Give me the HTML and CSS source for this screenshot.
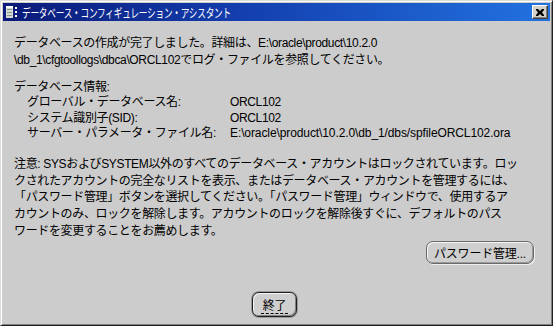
FILE: index.html
```html
<!DOCTYPE html>
<html lang="ja">
<head>
    <meta charset="UTF-8">
    <title>データベース・コンフィギュレーション・アシスタント</title>
    <link rel="stylesheet" href="styles.css">
</head>
<body>
    <div class="window">
        <div class="titlebar">
            <svg class="app-icon" width="14" height="14" viewBox="0 0 14 14">
                <rect x="1" y="1" width="7" height="12" fill="#d8d8d8"/>
                <rect x="1" y="1" width="7" height="2" fill="#ffffff"/>
                <rect x="2" y="4" width="5" height="1" fill="#7a9a7a"/>
                <rect x="2" y="7" width="5" height="1" fill="#7a9a7a"/>
                <rect x="2" y="10" width="5" height="1" fill="#7a9a7a"/>
                <rect x="10" y="2" width="2" height="2" fill="#ffffff"/>
                <rect x="10" y="6" width="2" height="2" fill="#ffffff"/>
                <rect x="10" y="10" width="2" height="2" fill="#ffffff"/>
            </svg>
            <span class="title">データベース・コンフィギュレーション・アシスタント</span>
            <div class="close-btn">
                <svg width="8" height="7" viewBox="0 0 8 7">
                    <path d="M0 0h2l2 2 2-2h2v1l-2 2.5 2 2.5v1h-2l-2-2-2 2h-2v-1l2-2.5-2-2.5z" fill="#000"/>
                </svg>
            </div>
        </div>
        <div class="content">
            <p class="msg">データベースの作成が完了しました。詳細は、E:\oracle\product\10.2.0<br>\db_1\cfgtoollogs\dbca\ORCL102でログ・ファイルを参照してください。</p>
            <div class="info">
                <div class="info-head">データベース情報:</div>
                <div class="info-row"><span class="label">グローバル・データベース名:</span><span>ORCL102</span></div>
                <div class="info-row"><span class="label">システム識別子(SID):</span><span>ORCL102</span></div>
                <div class="info-row"><span class="label">サーバー・パラメータ・ファイル名:</span><span class="path">E:\oracle\product\10.2.0\db_1/dbs/spfileORCL102.ora</span></div>
            </div>
            <p class="note">注意: SYSおよびSYSTEM以外のすべてのデータベース・アカウントはロックされています。ロッ<br>クされたアカウントの完全なリストを表示、またはデータベース・アカウントを管理するには、<br>「パスワード管理」ボタンを選択してください。「パスワード管理」ウィンドウで、使用するア<br>カウントのみ、ロックを解除します。アカウントのロックを解除後すぐに、デフォルトのパス<br>ワードを変更することをお薦めします。</p>
            <div class="pw-row">
                <button class="btn">パスワード管理...</button>
            </div>
            <div class="exit-row">
                <button class="btn exit"><span class="focus">終了</span></button>
            </div>
        </div>
    </div>
</body>
</html>
```

FILE: styles.css
```css
body {
    margin: 0;
    background: #ffffff;
    font-family: "Liberation Sans", "Noto Sans CJK JP", sans-serif;
    font-size: 12px;
    color: #000;
}
.window {
    width: 547px;
    height: 322px;
    background: #cccccc;
    border-top: 1px solid #dcdcdc;
    border-left: 1px solid #dcdcdc;
    border-right: 1px solid #202020;
    border-bottom: 1px solid #202020;
    box-shadow: inset 1px 1px 0 #ffffff, inset -1px -1px 0 #808080;
    padding: 2px 2px 0 2px;
    display: flex;
    flex-direction: column;
}
.titlebar {
    height: 18px;
    background: linear-gradient(to right, #0a1a78, #1440b0 45%, #2272e0);
    display: flex;
    align-items: center;
    padding: 0 2px 0 2px;
}
.app-icon {
    flex: none;
}
.title {
    color: #ffffff;
    margin-left: 3px;
    display: inline-block;
    font-size: 12.5px;
    letter-spacing: -0.3px;
    white-space: nowrap;
    transform: scaleX(0.69);
    transform-origin: left center;
    flex: 1;
}
.close-btn {
    width: 16px;
    height: 14px;
    box-sizing: border-box;
    background: #d4d0c8;
    border-top: 1px solid #ffffff;
    border-left: 1px solid #ffffff;
    border-right: 1px solid #404040;
    border-bottom: 1px solid #404040;
    box-shadow: inset -1px -1px 0 #808080;
    display: flex;
    align-items: center;
    justify-content: center;
}
.content {
    padding: 0 0 0 11px;
    flex: 1;
    display: flex;
    flex-direction: column;
    letter-spacing: -0.35px;
}
.msg {
    margin: 14px 0 0 0;
    line-height: 16.5px;
}
.info {
    margin-top: 12px;
    line-height: 15.3px;
}
.info-row {
    display: flex;
    padding-left: 13px;
}
.label {
    width: 203px;
    flex: none;
}
.path {
    letter-spacing: -0.1px;
}
.note {
    margin: 15px 0 0 0;
    line-height: 16.6px;
}
.pw-row {
    display: flex;
    justify-content: flex-end;
    padding-right: 16px;
    margin-top: 2px;
}
.btn {
    font: inherit;
    letter-spacing: -0.2px;
    background: #cfcfcf;
    border: 1px solid #6a6a6a;
    border-radius: 7px;
    box-shadow: inset 1px 1px 0 #f4f4f4, inset -1px -1px 0 #9a9a9a, 1px 1px 0 #efefef;
    height: 23px;
    padding: 0 7px;
    color: #000;
}
.exit-row {
    display: flex;
    justify-content: center;
    margin-top: 28px;
    padding-right: 15px;
}
.exit {
    height: 25px;
    padding: 0 8px;
    border: 1px solid #202020;
    box-shadow: inset 1px 1px 0 #f4f4f4, inset -1px -1px 0 #808080, 0 0 0 1px #9a9a9a;
}
.focus {
    border-bottom: 1px dashed #000;
    padding: 0 2px;
}
```
